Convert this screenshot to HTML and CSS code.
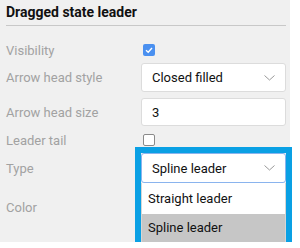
FILE: index.html
```html
<!DOCTYPE html>
<html lang="en">
<head>
    <meta charset="UTF-8">
    <meta name="viewport" content="width=device-width, initial-scale=1.0">
    <title>Dragged state leader</title>
    <link rel="stylesheet" href="styles.css">
</head>
<body>

    <div class="panel">
        <div class="panel-header">Dragged state leader</div>

        <div class="props">
            <!-- Visibility -->
            <div class="prop-label">Visibility</div>
            <div class="prop-value">
                <span class="checkbox checked">
                    <svg width="10" height="10" viewBox="0 0 10 10"><path d="M2 5.2 L4.2 7.2 L8 3" fill="none" stroke="#fff" stroke-width="1.4"/></svg>
                </span>
            </div>

            <!-- Arrow head style -->
            <div class="prop-label">Arrow head style</div>
            <div class="prop-value">
                <div class="select">
                    <span class="select-text">Closed filled</span>
                    <svg class="chevron" width="11" height="6" viewBox="0 0 11 6"><path d="M0.5 0.5 L5.5 5 L10.5 0.5" fill="none" stroke="#999" stroke-width="1"/></svg>
                </div>
            </div>

            <!-- Arrow head size -->
            <div class="prop-label">Arrow head size</div>
            <div class="prop-value">
                <div class="input">3</div>
            </div>

            <!-- Leader tail -->
            <div class="prop-label">Leader tail</div>
            <div class="prop-value">
                <span class="checkbox"></span>
            </div>

            <!-- Type -->
            <div class="prop-label">Type</div>
            <div class="prop-value">
                <div class="combo">
                    <div class="select focused">
                        <span class="select-text">Spline leader</span>
                        <svg class="chevron" width="11" height="6" viewBox="0 0 11 6"><path d="M0.5 0.5 L5.5 5 L10.5 0.5" fill="none" stroke="#999" stroke-width="1"/></svg>
                    </div>
                    <ul class="dropdown">
                        <li class="dropdown-item">Straight leader</li>
                        <li class="dropdown-item selected">Spline leader</li>
                    </ul>
                    <div class="combo-ring"></div>
                </div>
            </div>

            <!-- Color -->
            <div class="prop-label">Color</div>
            <div class="prop-value"></div>
        </div>
    </div>

</body>
</html>
```

FILE: styles.css
```css
html,
body {
  margin: 0;
  padding: 0;
  background: #fff;
}

body {
  font-family: Roboto, "Liberation Sans", Arial, sans-serif;
  font-size: 13px;
  color: #111;
}

.panel {
  width: 290px;
  height: 242px;
  box-sizing: border-box;
  padding: 0 4px 0 6px;
  background: #f0f0f0;
}

.panel-header {
  height: 25px;
  line-height: 24px;
  font-size: 14px;
  font-weight: 700;
  color: #111;
  border-bottom: 1px solid #c8c8c8;
}

.props {
  display: grid;
  grid-template-columns: 135px 145px;
  grid-template-rows: 24px 31px 38px 18px 38px 40px;
  padding-top: 12px;
}

.prop-label {
  display: flex;
  align-items: center;
  color: #a2a2a2;
}

.prop-value {
  display: flex;
  align-items: center;
}

.checkbox {
  display: inline-flex;
  align-items: center;
  justify-content: center;
  width: 12px;
  height: 12px;
  margin-left: 2px;
  box-sizing: border-box;
  border: 1px solid #8a8a8a;
  border-radius: 2px;
  background: #fff;
}

.checkbox.checked {
  border: none;
  background: #4a90f0;
}

.select,
.input {
  display: flex;
  align-items: center;
  width: 145px;
  height: 29px;
  box-sizing: border-box;
  padding: 0 10px;
  background: #fff;
  border: 1px solid #dcdcdc;
  border-radius: 3px;
}

.input {
  height: 28px;
}

.select-text {
  flex: 1;
}

.chevron {
  margin-right: 0;
}

.combo {
  position: relative;
}

.select.focused {
  height: 30px;
  border-color: #8ab4ee;
}

.dropdown {
  position: absolute;
  top: 100%;
  left: 0;
  right: 0;
  margin: 0;
  padding: 0;
  list-style: none;
  background: #fff;
  border: 1px solid #d6d6d6;
  border-top: none;
}

.dropdown-item {
  height: 31px;
  line-height: 31px;
  padding-left: 6px;
}

.dropdown-item.selected {
  height: 28px;
  line-height: 28px;
  background: #c6c6c6;
}

.combo-ring {
  position: absolute;
  top: -6px;
  left: -6px;
  right: -6px;
  height: 89px;
  border: 6px solid #0aa0e4;
  pointer-events: none;
}
```
